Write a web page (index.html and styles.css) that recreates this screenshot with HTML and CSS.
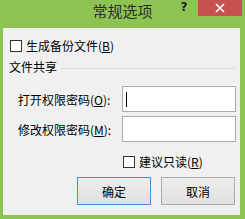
FILE: index.html
```html
<!DOCTYPE html>
<html lang="zh-CN">
<head>
    <meta charset="UTF-8">
    <title>常规选项</title>
    <link rel="stylesheet" href="styles.css">
</head>
<body>
    <div class="window">
        <div class="titlebar">
            <div></div>
            <div class="title">常规选项</div>
            <div class="caption-btns">
                <div class="help">?</div>
                <div class="close">
                    <svg width="10" height="10" viewBox="0 0 10 10"><path d="M1 1L9 9M9 1L1 9" stroke="#fff" stroke-width="1.6"/></svg>
                </div>
            </div>
        </div>
        <div class="panel">
            <div class="check-row first">
                <span class="box"></span>
                <span>生成备份文件(<u>B</u>)</span>
            </div>
            <div class="group">
                <span>文件共享</span>
                <span class="rule"></span>
            </div>
            <div class="field-row">
                <label>打开权限密码(<u>O</u>):</label>
                <div class="input"><span class="caret"></span></div>
            </div>
            <div class="field-row second">
                <label>修改权限密码(<u>M</u>):</label>
                <div class="input"></div>
            </div>
            <div class="check-row readonly">
                <span class="box"></span>
                <span>建议只读(<u>R</u>)</span>
            </div>
            <div class="buttons">
                <button class="btn default">确定</button>
                <button class="btn">取消</button>
            </div>
        </div>
    </div>
</body>
</html>
```

FILE: styles.css
```css
body { margin: 0; font-family: "Noto Sans CJK SC", "Microsoft YaHei", sans-serif; font-size: 12px; color: #000; }
.window { width: 245px; height: 219px; background: #8dc351; box-sizing: border-box; padding: 0 5px 4px 3px; }
.titlebar { display: grid; grid-template-columns: 1fr auto 1fr; height: 28px; margin: 0 -5px 0 -3px; }
.title { font-size: 15px; line-height: 20px; color: #2e2e2e; padding-top: 1px; }
.caption-btns { display: flex; justify-content: flex-end; align-items: flex-start; }
.help { width: 16px; margin-right: 6px; text-align: center; font-family: "DejaVu Sans", sans-serif; font-weight: bold; font-size: 12px; line-height: 14px; color: #222; }
.close { width: 44px; height: 16px; margin-right: 3px; background: #c75050; display: flex; align-items: center; justify-content: center; }
.panel { background: #f0f0f0; height: 187px; overflow: hidden; }
.check-row { display: flex; align-items: center; height: 16px; line-height: 16px; }
.check-row.first { margin-top: 10px; padding-left: 7px; }
.check-row.readonly { margin-top: 12px; padding-left: 120px; }
.box { width: 12px; height: 12px; box-sizing: border-box; border: 1px solid #333; background: #fff; margin-right: 4px; }
.group { display: flex; align-items: center; height: 16px; line-height: 16px; margin-top: 5px; padding: 0 5px 0 6px; }
.rule { flex: 1; height: 1px; background: #dcdcdc; margin-left: 4px; margin-top: 2px; }
.field-row { display: grid; grid-template-columns: 104px 114px; height: 26px; align-items: center; margin-top: 11px; padding-left: 15px; }
.field-row.second { margin-top: 4px; }
.input { height: 26px; box-sizing: border-box; border: 1px solid #ababab; background: #fff; display: flex; align-items: center; padding-left: 3px; }
.caret { width: 1px; height: 15px; background: #000; }
.buttons { display: flex; justify-content: flex-end; gap: 10px; margin-top: 7px; padding-right: 5px; }
.btn { width: 74px; height: 28px; font-family: inherit; font-size: 12px; color: #000; background: linear-gradient(#eeeeee, #e1e1e1); border: 1px solid #acacac; border-radius: 0; padding: 0; }
.btn.default { border-color: #4a90d9; }
```
